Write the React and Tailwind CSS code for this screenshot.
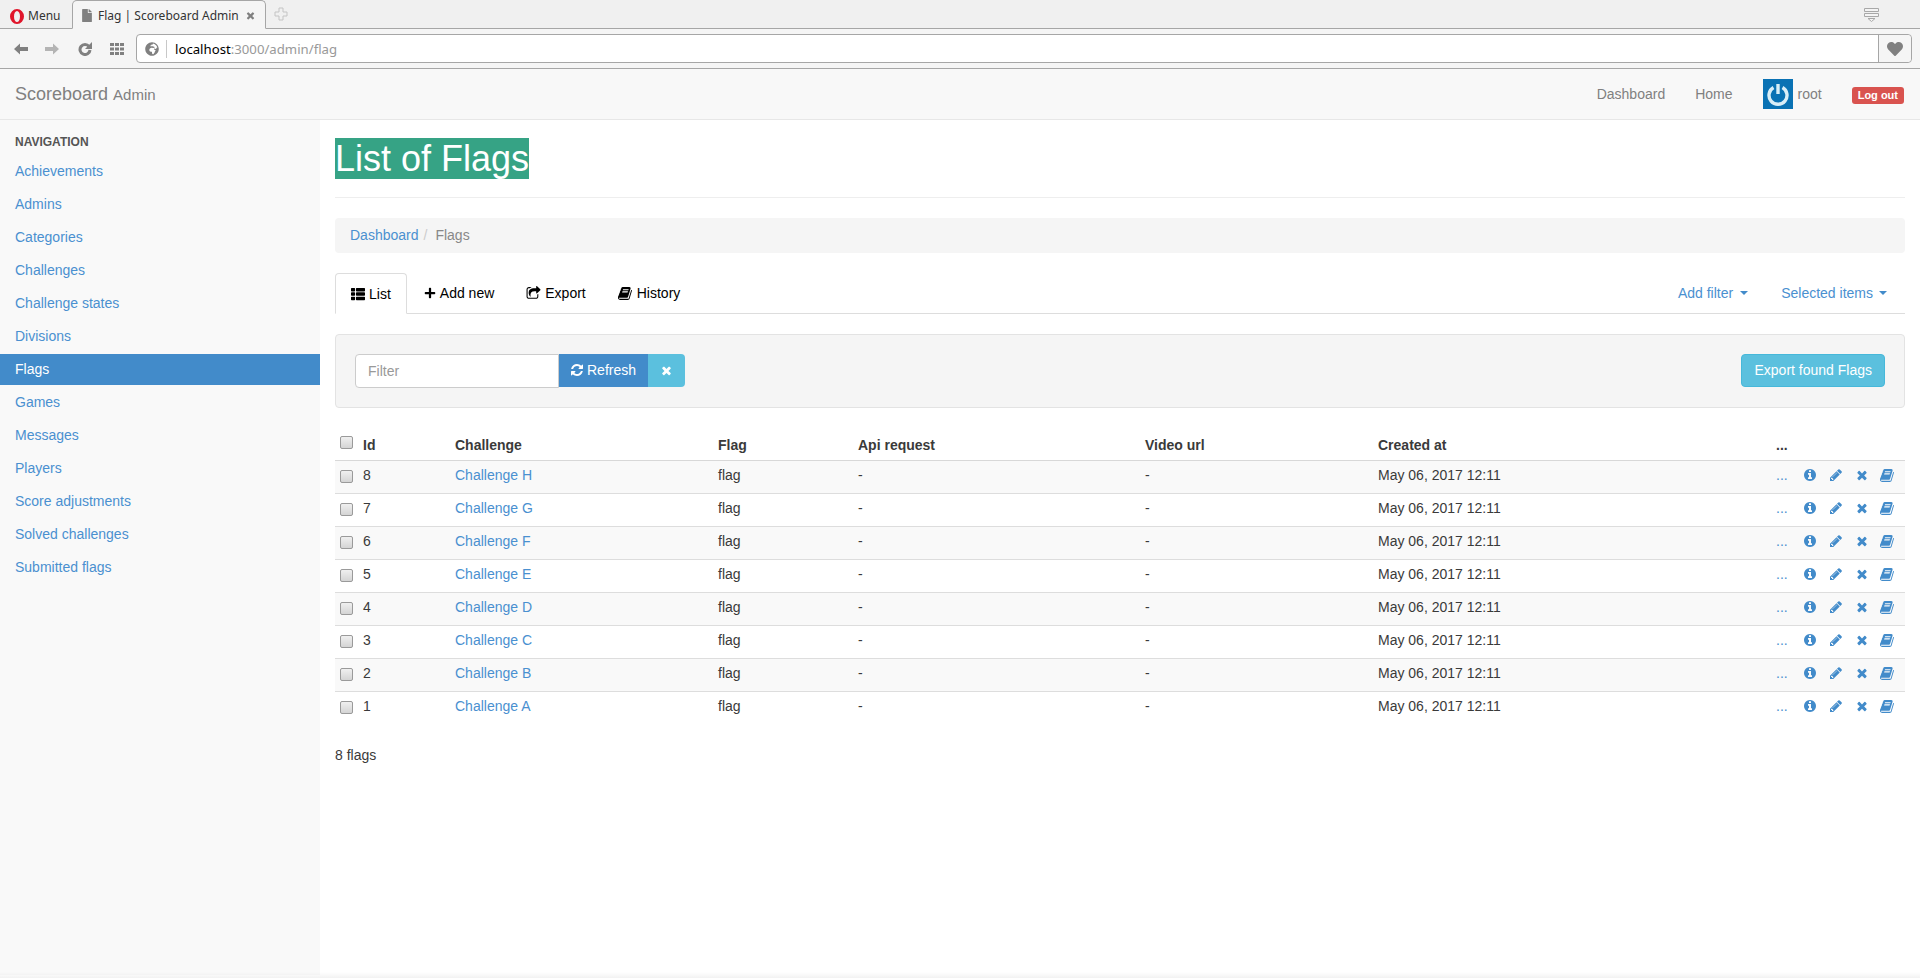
import { FaThList, FaPlus, FaHeart, FaGlobeAfrica, FaFile } from 'react-icons/fa';

const navItems = ['Achievements', 'Admins', 'Categories', 'Challenges', 'Challenge states', 'Divisions', 'Flags', 'Games', 'Messages', 'Players', 'Score adjustments', 'Solved challenges', 'Submitted flags'];
const rows = [
  [8, 'H'], [7, 'G'], [6, 'F'], [5, 'E'], [4, 'D'], [3, 'C'], [2, 'B'], [1, 'A'],
];

// Font Awesome 4 glyphs, the package only ships the newer redrawn ones
const glyphs = {
  book: 'M1639 478q40 57 18 129l-275 906q-19 64-76.5 107.5t-122.5 43.5h-923q-77 0-148.5-53.5t-99.5-131.5q-24-67-2-127 0-4 3-27t4-37q1-8-3-21.5t-3-19.5q2-11 8-21t16.5-23.5 16.5-23.5q23-38 45-91.5t30-91.5q3-10 .5-30t-.5-28q3-11 17-28t17-23q21-36 42-92t25-90q1-9-2.5-32t.5-28q4-13 22-30.5t22-22.5q19-26 42.5-84.5t27.5-96.5q1-8-3-25.5t-2-26.5q2-8 9-18t18-23 17-21q8-12 16.5-30.5t15-35 16-36 19.5-32 26.5-23.5 36-11.5 47.5 5.5l-1 3q38-9 51-9h761q74 0 114 56t18 130l-274 906q-36 119-71.5 153.5t-128.5 34.5h-869q-27 0-38 15-11 16-1 43 24 70 144 70h923q29 0 56-15.5t35-41.5l300-987q7-22 5-57 38 15 59 43zm-1064 2q-4 13 2 22.5t20 9.5h608q13 0 25.5-9.5t16.5-22.5l21-64q4-13-2-22.5t-20-9.5h-608q-13 0-25.5 9.5t-16.5 22.5zm-83 256q-4 13 2 22.5t20 9.5h608q13 0 25.5-9.5t16.5-22.5l21-64q4-13-2-22.5t-20-9.5h-608q-13 0-25.5 9.5t-16.5 22.5z',
  refresh: 'M1639 1056q0 5-1 7-64 268-268 434.5t-478 166.5q-146 0-282.5-55t-243.5-157l-129 129q-19 19-45 19t-45-19-19-45v-448q0-26 19-45t45-19h448q26 0 45 19t19 45-19 45l-137 137q71 66 161 102t187 36q134 0 250-65t186-179q11-17 53-117 8-23 30-23h192q13 0 22.5 9.5t9.5 22.5zm25-800v448q0 26-19 45t-45 19h-448q-26 0-45-19t-19-45 19-45l138-138q-148-137-349-137-134 0-250 65t-186 179q-11 17-53 117-8 23-30 23h-199q-13 0-22.5-9.5t-9.5-22.5v-7q65-268 270-434.5t480-166.5q146 0 284 55.5t245 156.5l130-129q19-19 45-19t45 19 19 45z',
  times: 'M1490 1322q0 40-28 68l-136 136q-28 28-68 28t-68-28l-294-294-294 294q-28 28-68 28t-68-28l-136-136q-28-28-28-68t28-68l294-294-294-294q-28-28-28-68t28-68l136-136q28-28 68-28t68 28l294 294 294-294q28-28 68-28t68 28l136 136q28 28 28 68t-28 68l-294 294 294 294q28 28 28 68z',
  pencil: 'M491 1536l91-91-235-235-91 91v107h128v128h107zm523-928q0-22-22-22-10 0-17 7l-542 542q-7 7-7 17 0 22 22 22 10 0 17-7l542-542q7-7 7-17zm-54-192l416 416-832 832h-416v-416zm683 96q0 53-37 90l-166 166-416-416 166-165q36-38 90-38 53 0 91 38l235 234q37 39 37 91z',
  info: 'M1152 1376v-160q0-14-9-23t-23-9h-96v-512q0-14-9-23t-23-9h-320q-14 0-23 9t-9 23v160q0 14 9 23t23 9h96v320h-96q-14 0-23 9t-9 23v160q0 14 9 23t23 9h448q14 0 23-9t9-23zm-128-896v-160q0-14-9-23t-23-9h-192q-14 0-23 9t-9 23v160q0 14 9 23t23 9h192q14 0 23-9t9-23zm640 416q0 209-103 385.5t-279.5 279.5-385.5 103-385.5-103-279.5-279.5-103-385.5 103-385.5 279.5-279.5 385.5-103 385.5 103 279.5 279.5 103 385.5z',
  share: 'M1472 989v259q0 119-84.5 203.5t-203.5 84.5h-832q-119 0-203.5-84.5t-84.5-203.5v-832q0-119 84.5-203.5t203.5-84.5h255q13 0 22.5 9.5t9.5 22.5q0 27-26 32-77 26-133 60-10 4-16 4h-112q-66 0-113 47t-47 113v832q0 66 47 113t113 47h832q66 0 113-47t47-113v-214q0-19 18-29 28-13 54-37 16-16 35-8 21 9 21 29zm237-496l-384 384q-18 19-45 19-12 0-25-5-39-17-39-59v-192h-160q-323 0-438 131-119 137-74 473 3 23-20 34-8 2-12 2-16 0-26-13-10-14-21-31t-39.5-68.5-49.5-99.5-38.5-114-17.5-122q0-49 3.5-91t14-90 28-88 47-81.5 68.5-74 94.5-61.5 124.5-48.5 159.5-30.5 196.5-11h160v-192q0-42 39-59 13-5 25-5 26 0 45 19l384 384q19 19 19 45t-19 45z',
};

function Glyph({ name, className }) {
  return (
    <svg viewBox="0 0 1792 1792" fill="currentColor" className={className}>
      <path d={glyphs[name]} />
    </svg>
  );
}

function Checkbox() {
  return <span className="block w-[13px] h-[13px] rounded-[2px] border border-[#9a9a9a] bg-gradient-to-b from-[#f0f0f0] to-[#d4d4d4]" />;
}

function Caret() {
  return <span className="w-0 h-0 border-x-4 border-t-4 border-x-transparent border-t-[#428bca]" />;
}

function Tab({ icon, label, active }) {
  return (
    <div className={`flex items-center gap-[4px] px-[15px] mr-[2px] text-black ${active ? 'h-[41px] bg-white border border-[#ddd] border-b-white rounded-t-[4px]' : 'h-[40px]'}`}>
      {icon}
      <span>{label}</span>
    </div>
  );
}

function BrowserChrome() {
  return (
    <div className="font-['Noto_Sans',sans-serif] text-[#333]">
      <div className="h-[29px] bg-[#f0f0f0] border-b border-[#a6a6a6] flex items-end">
        <div className="w-[72px] h-[28px] flex items-center pl-[10px] pt-[4px] gap-[4px] text-[12px]">
          <svg viewBox="0 0 14 15" className="w-[14px] h-[15px]">
            <path fillRule="evenodd" fill="#e0152a" d="M7 0a7 7.5 0 1 0 0 15a7 7.5 0 1 0 0-15zM7 2a3 5.5 0 1 1 0 11a3 5.5 0 1 1 0-11z" />
          </svg>
          <span>Menu</span>
        </div>
        <div className="w-[194px] h-[29px] -mb-px bg-[#f5f5f5] border border-[#a6a6a6] border-b-[#f5f5f5] rounded-t-[5px] flex items-center pl-[9px] pt-[2px] text-[12px]">
          <FaFile className="w-[10px] h-[13px] text-[#808080] shrink-0 mr-[6px]" />
          <span className="whitespace-nowrap">Flag | Scoreboard Admin</span>
          <Glyph name="times" className="w-[11px] h-[11px] text-[#808080] shrink-0 ml-[6px]" />
        </div>
        <svg viewBox="0 0 14 14" className="ml-[8px] mb-[7px] w-[14px] h-[14px]">
          <path d="M5 1h4v4h4v4h-4v4h-4v-4h-4v-4h4z" fill="none" stroke="#c4c4c4" />
        </svg>
        <svg viewBox="0 0 15 14" className="ml-auto mr-[41px] mb-[6px] w-[15px] h-[14px]">
          <path d="M.5.5h14v3h-14zM.5 5.5h14v3h-14zM4 10.5h7l-3.5 3z" fill="#f4f4f4" stroke="#a8a8a8" />
        </svg>
      </div>
      <div className="h-[40px] bg-[#f5f5f5] border-b border-[#a6a6a6] flex items-center">
        <div className="w-[136px] flex items-center pl-[14px]">
          <svg viewBox="0 0 14 12" className="w-[14px] h-[12px] mr-[17px]" fill="#808080">
            <path d="M0 6L6 .5V4h8v4H6v3.500z" />
          </svg>
          <svg viewBox="0 0 14 12" className="w-[14px] h-[12px] mr-[19px]" fill="#b4b4b4">
            <path d="M14 6L8 .5V4H0v4h8v3.500z" />
          </svg>
          <svg viewBox="0 0 14 14" className="w-[14px] h-[14px] mr-[18px]">
            <path d="M11 4.500A5 5 0 1 0 12 8" fill="none" stroke="#808080" strokeWidth="3" />
            <path d="M14 0v7H7z" fill="#808080" />
          </svg>
          <svg viewBox="0 0 14 12" className="w-[14px] h-[12px]" fill="#808080">
            <path d="M0 0h4v3h-4zM5 0h4v3h-4zM10 0h4v3h-4zM0 4.500h4v3h-4zM5 4.500h4v3h-4zM10 4.500h4v3h-4zM0 9h4v3h-4zM5 9h4v3h-4zM10 9h4v3h-4z" />
          </svg>
        </div>
        <div className="flex-1 mr-[8px] h-[29px] bg-white border border-[#a6a6a6] rounded-[4px] flex items-center">
          <div className="w-[30px] h-[18px] border-r border-[#c8c8c8] flex items-center justify-center -mr-px">
            <FaGlobeAfrica className="text-[#808080] text-[14px]" />
          </div>
          <span className="ml-[9px] text-[13.2px] text-black">localhost<span className="text-[#999]">:3000/admin/flag</span></span>
          <div className="ml-auto w-[33px] h-full bg-[#f5f5f5] border-l border-[#a6a6a6] rounded-r-[4px] flex items-center justify-center">
            <FaHeart className="text-[#808080] text-[16px]" />
          </div>
        </div>
      </div>
    </div>
  );
}

export default function App() {
  return (
    <div className="relative h-[978px] bg-white font-['Liberation_Sans',sans-serif] text-[14px] leading-[20px] text-[#3a3a3a] overflow-hidden">
      <BrowserChrome />

      {/* Navbar */}
      <div className="h-[51px] bg-[#f8f8f8] border-b border-[#e7e7e7] flex items-center pl-[15px] pr-[16px] text-[#808080]">
        <span className="text-[18px]">Scoreboard <span className="text-[15px]">Admin</span></span>
        <div className="ml-auto flex items-center">
          <span className="mr-[30px]">Dashboard</span>
          <span className="mr-[30px]">Home</span>
          <span className="w-[30px] h-[30px] bg-[#0a72b4] mr-[5px]">
            <svg viewBox="0 0 30 30" className="w-[30px] h-[30px]">
              <path d="M10.500 8.500a9 9 0 1 0 9 0" fill="none" stroke="#d9eef7" strokeWidth="3.4" />
              <path d="M15 5v10" stroke="#d9eef7" strokeWidth="3.4" />
            </svg>
          </span>
          <span className="mr-[30px]">root</span>
          <span className="bg-[#d9534f] text-white text-[11px] font-bold leading-[17px] h-[17px] px-[6px] rounded-[3px] mt-[2px]">Log out</span>
        </div>
      </div>

      <div className="flex h-[855px]">
        {/* Sidebar */}
        <div className="w-[320px] shrink-0 bg-[#f9f9f9] pt-[12px]">
          <div className="px-[15px] text-[12px] font-bold text-[#555] h-[20px] leading-[20px] mb-[4px]">NAVIGATION</div>
          {navItems.map(item => (
            <div
              key={item}
              className={`h-[31px] mb-[2px] px-[15px] pb-[1px] flex items-center ${item === 'Flags' ? 'bg-[#428bca] text-white' : 'text-[#4a90d0]'}`}
            >
              {item}
            </div>
          ))}
        </div>

        {/* Main */}
        <div className="flex-1 pl-[15px] pr-[15px] min-w-0">
          <div className="pt-[18px] pb-[18px] border-b border-[#eee]">
            <h1 className="inline-block align-top text-[36px] leading-[41px] h-[41px] bg-[#36a385] text-white font-normal">List of Flags</h1>
          </div>

          <div className="mt-[20px] h-[35px] bg-[#f5f5f5] rounded-[4px] flex items-center px-[15px] pb-[2px]">
            <span className="text-[#4a90d0]">Dashboard</span>
            <span className="text-[#ccc] px-[5px]">/</span>
            <span className="text-[#888] ml-[3px]">Flags</span>
          </div>

          <div className="mt-[20px] h-[41px] border-b border-[#ddd] flex items-start">
            <Tab active icon={<FaThList className="w-[14px] h-[14px]" />} label="List" />
            <Tab icon={<FaPlus className="w-[12px] h-[12px]" />} label="Add new" />
            <Tab icon={<Glyph name="share" className="w-[15px] h-[15px]" />} label="Export" />
            <Tab icon={<Glyph name="book" className="w-[15px] h-[15px]" />} label="History" />
            <div className="ml-auto flex text-[#4a90d0] mr-[3px]">
              <div className="h-[40px] flex items-center gap-[7px] pl-[14px] pr-[15px]">Add filter <Caret /></div>
              <div className="h-[40px] flex items-center gap-[6px] pl-[18px] pr-[15px]">Selected items <Caret /></div>
            </div>
          </div>

          <div className="mt-[20px] h-[74px] bg-[#f5f5f5] border border-[#e3e3e3] rounded-[4px] flex items-start pt-[19px] px-[19px]">
            <input
              className="w-[204px] h-[34px] bg-white border border-[#ccc] rounded-l-[4px] px-[12px] outline-none placeholder:text-[#999]"
              placeholder="Filter"
            />
            <div className="h-[33px] pl-[11px] pr-[12px] pb-[1px] bg-[#428bca] text-white flex items-center gap-[3px]">
              <Glyph name="refresh" className="w-[14px] h-[14px]" />
              <span>Refresh</span>
            </div>
            <div className="h-[33px] w-[37px] bg-[#5bc0de] text-white rounded-r-[4px] flex items-center justify-center">
              <Glyph name="times" className="w-[13px] h-[13px]" />
            </div>
            <div className="ml-auto h-[33px] px-[12px] pb-[1px] bg-[#5bc0de] text-white border border-[#46b8da] rounded-[4px] flex items-center">Export found Flags</div>
          </div>

          <table className="mt-[21px] w-full table-fixed border-collapse">
            <colgroup>
              <col className="w-[28px]" />
              <col className="w-[92px]" />
              <col className="w-[263px]" />
              <col className="w-[140px]" />
              <col className="w-[287px]" />
              <col className="w-[233px]" />
              <col className="w-[398px]" />
              <col />
            </colgroup>
            <thead>
              <tr className="h-[31px] border-b border-[#d8d8d8] text-left [&>th]:font-bold [&>th]:pt-[1px]">
                <th className="pl-[5px] !pt-0 pb-[3px]"><Checkbox /></th>
                <th>Id</th>
                <th>Challenge</th>
                <th>Flag</th>
                <th>Api request</th>
                <th>Video url</th>
                <th>Created at</th>
                <th>...</th>
              </tr>
            </thead>
            <tbody>
              {rows.map(([id, letter], i) => (
                <tr key={id} className={`h-[33px] ${i < 7 ? 'border-b border-[#ddd]' : ''} ${i % 2 === 0 ? 'bg-[#f9f9f9]' : ''} [&>td]:pb-[3px]`}>
                  <td className="pl-[5px] !pb-0"><Checkbox /></td>
                  <td>{id}</td>
                  <td className="text-[#4a90d0]">Challenge {letter}</td>
                  <td>flag</td>
                  <td>-</td>
                  <td>-</td>
                  <td>May 06, 2017 12:11</td>
                  <td>
                    <div className="flex items-center text-[#428bca]">
                      <span className="w-[27px] text-[#4a90d0]">...</span>
                      <span className="w-[26px] flex"><Glyph name="info" className="w-[14px] h-[14px]" /></span>
                      <span className="w-[26px] flex"><Glyph name="pencil" className="w-[14px] h-[14px]" /></span>
                      <span className="w-[25px] flex"><Glyph name="times" className="w-[14px] h-[14px]" /></span>
                      <span className="flex"><Glyph name="book" className="w-[15px] h-[15px]" /></span>
                    </div>
                  </td>
                </tr>
              ))}
            </tbody>
          </table>

          <div className="mt-[21px]">8 flags</div>
        </div>
      </div>

      {/* faint shade along the bottom edge of the window */}
      <div className="absolute inset-x-0 bottom-0 h-[6px] bg-gradient-to-b from-transparent to-black/5" />
    </div>
  );
}
